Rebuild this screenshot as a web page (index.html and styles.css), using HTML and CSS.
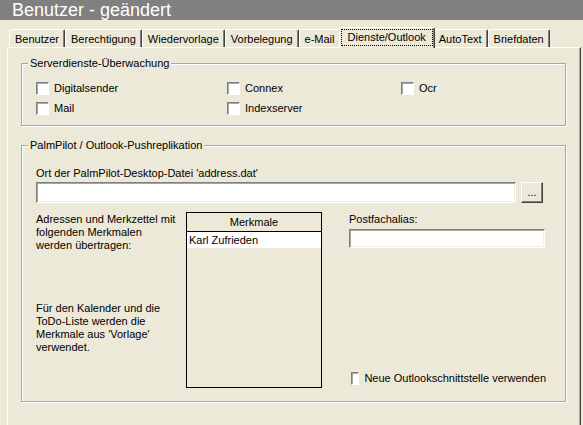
FILE: index.html
```html
<!DOCTYPE html>
<html lang="de">
<head>
    <meta charset="UTF-8">
    <meta name="viewport" content="width=device-width, initial-scale=1.0">
    <title>Benutzer - geändert</title>
    <link rel="stylesheet" href="styles.css">
</head>
<body>

    <div class="titlebar">Benutzer - geändert</div>

    <div class="tabs">
        <div class="tab">Benutzer</div>
        <div class="tab">Berechtigung</div>
        <div class="tab">Wiedervorlage</div>
        <div class="tab">Vorbelegung</div>
        <div class="tab">e-Mail</div>
        <div class="tab active"><span class="focus">Dienste/Outlook</span></div>
        <div class="tab">AutoText</div>
        <div class="tab">Briefdaten</div>
    </div>

    <div class="panel">
        <fieldset class="group">
            <legend>Serverdienste-Überwachung</legend>
            <div class="checks">
                <label class="check"><span class="box"></span>Digitalsender</label>
                <label class="check"><span class="box"></span>Connex</label>
                <label class="check"><span class="box"></span>Ocr</label>
                <label class="check"><span class="box"></span>Mail</label>
                <label class="check"><span class="box"></span>Indexserver</label>
            </div>
        </fieldset>

        <fieldset class="group palm">
            <legend>PalmPilot / Outlook-Pushreplikation</legend>
            <div class="palm-body">
                <div class="caption">Ort der PalmPilot-Desktop-Datei 'address.dat'</div>
                <div class="file-row">
                    <input class="field file" type="text">
                    <button class="btn">...</button>
                </div>
                <div class="columns">
                    <div class="notes">
                        <p>Adressen und Merkzettel mit<br>folgenden Merkmalen<br>werden übertragen:</p>
                        <p class="later">Für den Kalender und die<br>ToDo-Liste werden die<br>Merkmale aus 'Vorlage'<br>verwendet.</p>
                    </div>
                    <div class="list">
                        <div class="list-head">Merkmale</div>
                        <div class="list-item">Karl Zufrieden</div>
                    </div>
                    <div class="side">
                        <div class="caption">Postfachalias:</div>
                        <input class="field alias" type="text">
                        <label class="check outlook"><span class="box"></span>Neue Outlookschnittstelle verwenden</label>
                    </div>
                </div>
            </div>
        </fieldset>
    </div>

</body>
</html>
```

FILE: styles.css
```css
body { margin: 0; height: 425px; overflow: hidden; background: #ece9d8; color: #000; font: 11px "Liberation Sans", Arial, sans-serif; }
.titlebar { height: 20px; background: #808080; color: #fff; font-size: 18px; line-height: 20px; padding-left: 12px; white-space: nowrap; }

/* tab strip */
.tabs { display: flex; align-items: flex-end; height: 27px; padding-left: 9px; }
.tab { height: 18px; box-sizing: border-box; padding: 2px 5px 0; line-height: 15px; border: 1px solid #fff; border-right-color: #404040; border-bottom: 0; border-radius: 2px 2px 0 0; box-shadow: inset -1px 0 #808080; white-space: nowrap; }
.tab.active { position: relative; z-index: 1; height: 21px; margin: 0 -2px -1px; padding: 1px 1px 0; background: #ece9d8; }
.focus { display: block; border: 1px dotted #000; padding: 0 6px; line-height: 15px; }

.panel { margin-left: 7px; width: 574px; height: 380px; box-sizing: border-box; padding: 9px 14px 0 13px; border-top: 1px solid #fff; border-left: 1px solid #fff; border-right: 1px solid #404040; box-shadow: inset -1px 0 #aca899; }

/* group boxes */
.group { margin: 0; padding: 0; border: 1px solid #aca899; box-shadow: inset 1px 1px #fff, 1px 1px #fff; min-width: 0; }
.group legend { margin-left: 6px; padding: 0 2px; line-height: 13px; background: #ece9d8; }
.palm { margin-top: 13px; }

.checks { display: grid; grid-template-columns: 191px 174px auto; grid-auto-rows: 20px; padding: 8px 0 7px 14px; }
.check { display: flex; align-items: center; gap: 5px; height: 20px; white-space: nowrap; }
.box { width: 13px; height: 13px; box-sizing: border-box; background: #fff; border: 1px solid; border-color: #808080 #fff #fff #808080; box-shadow: inset 1px 1px #a7a6a0; }

.palm-body { padding: 15px 0 13px 14px; }
.caption { line-height: 13px; white-space: nowrap; }
.file-row { display: flex; gap: 5px; margin-top: 2px; }
.field { appearance: none; box-sizing: border-box; margin: 0; padding: 0 2px; background: #fff; border: 1px solid; border-color: #808080 #fff #fff #808080; box-shadow: inset 1px 1px #a7a6a0, inset -1px -1px #f1efe2; font: inherit; outline: none; }
.file { width: 480px; height: 21px; }
.btn { width: 22px; height: 21px; box-sizing: border-box; padding: 0; background: #ece9d8; border: 1px solid; border-color: #fff #404040 #404040 #fff; box-shadow: inset -1px -1px #808080; font: inherit; color: #000; line-height: 17px; }

.columns { display: flex; margin-top: 9px; height: 176px; }
.notes { width: 150px; }
.notes p { margin: 1px 0 0; line-height: 13px; white-space: nowrap; }
.notes .later { margin-top: 50px; }

.list { width: 136px; box-sizing: border-box; border: 1px solid #000; }
.list-head { line-height: 18px; text-align: center; border-bottom: 1px solid #000; }
.list-item { line-height: 16px; padding-left: 2px; background: #fff; white-space: nowrap; }

.side { display: flex; flex-direction: column; margin-left: 27px; width: 197px; }
.side .caption { margin-top: 1px; }
.alias { width: 196px; height: 19px; margin-top: 3px; }
.outlook { margin-top: auto; margin-left: 2px; }
```
